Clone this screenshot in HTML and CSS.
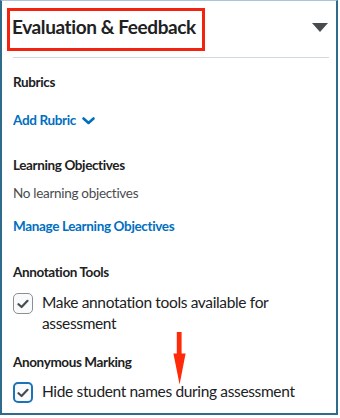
FILE: index.html
```html
<!DOCTYPE html>
<html>
<head>
<meta charset="utf-8">
<link rel="stylesheet" href="styles.css">
</head>
<body>
<div class="panel">
  <div class="header">
    <h2 class="title">Evaluation &amp; Feedback</h2>
    <svg class="caret" width="16" height="9" viewBox="0 0 16 9"><path d="M0 0H16L8 9Z" fill="#494c4e"/></svg>
  </div>
  <div class="sep"></div>
  <div class="label rubrics">Rubrics</div>
  <a class="link add-rubric">Add Rubric <svg class="chev" width="13" height="8" viewBox="0 0 13 8"><path d="M1.5 1.5L6.5 6L11.5 1.5" fill="none" stroke="#006fbf" stroke-width="2.6" stroke-linecap="round" stroke-linejoin="round"/></svg></a>
  <div class="label lo">Learning Objectives</div>
  <div class="plain">No learning objectives</div>
  <a class="link manage">Manage Learning Objectives</a>
  <div class="label annot">Annotation Tools</div>
  <div class="check-row first">
    <span class="box"><svg width="12" height="10" viewBox="0 0 12 10"><path d="M1.5 5.2L4.6 8L10.5 1.8" fill="none" stroke="#494c4e" stroke-width="2.2" stroke-linecap="round" stroke-linejoin="round"/></svg></span>
    <span class="check-text">Make annotation tools available for assessment</span>
  </div>
  <div class="label anon">Anonymous Marking</div>
  <div class="check-row second">
    <span class="box focus"><svg width="12" height="10" viewBox="0 0 12 10"><path d="M1.5 5.2L4.6 8L10.5 1.8" fill="none" stroke="#494c4e" stroke-width="2.2" stroke-linecap="round" stroke-linejoin="round"/></svg></span>
    <span class="check-text">Hide student names during assessment</span>
  </div>
  <svg class="arrow" width="13" height="53" viewBox="0 0 13 53"><path d="M3.8 0H8.6V21.5H12.6L6.6 52.5L0.4 21.5H3.8Z" fill="#ff2a0a"/></svg>
</div>
</body>
</html>
```
FILE: styles.css
```css
html, body {
  margin: 0;
  padding: 0;
  background: #ffffff;
}
body {
  font-family: Lato, "Noto Sans", sans-serif;
  color: #202122;
}
.panel {
  box-sizing: border-box;
  width: 338px;
  height: 415px;
  border: 2px solid #2f6b8b;
  border-top: 1px solid #a8c6da;
  padding: 0 0 0 11px;
  position: relative;
}
.header {
  display: flex;
  align-items: flex-start;
  justify-content: space-between;
  margin: 7px 0 0 -6px;
  padding-right: 8px;
}
.title {
  margin: 0;
  box-sizing: border-box;
  width: 198px;
  height: 43px;
  border: 3px solid #f2240f;
  padding: 0 0 5px 2px;
  font-size: 19px;
  font-weight: 700;
  line-height: 32px;
  letter-spacing: -0.4px;
  white-space: nowrap;
  color: #202122;
}
.caret {
  margin-top: 15px;
}
.sep {
  height: 1px;
  background: #d3d9e3;
  width: 316px;
  margin-top: 6px;
}
.label {
  font-size: 13.5px;
  font-weight: 700;
  line-height: 20px;
  letter-spacing: -0.38px;
  color: #202122;
}
.rubrics {
  margin-top: 14px;
}
.link {
  color: #006fbf;
  font-weight: 700;
  font-size: 13.5px;
  line-height: 20px;
  letter-spacing: -0.35px;
  display: flex;
  align-items: center;
  width: max-content;
}
.add-rubric {
  margin-top: 18px;
}
.chev {
  margin-left: 6px;
  margin-top: 1px;
}
.lo {
  margin-top: 25px;
}
.plain {
  font-size: 13.5px;
  line-height: 20px;
  letter-spacing: -0.3px;
  color: #494c4e;
  margin-top: 8px;
}
.manage {
  margin-top: 13px;
}
.annot {
  margin-top: 26px;
}
.check-row {
  display: flex;
  align-items: flex-start;
  gap: 9px;
}
.check-row.first {
  margin-top: 10px;
}
.check-row.second {
  margin-top: 9px;
}
.box {
  box-sizing: border-box;
  width: 20px;
  height: 21px;
  margin-top: 1px;
  border: 1px solid #8a8f92;
  border-radius: 5px;
  display: flex;
  align-items: center;
  justify-content: center;
  flex: none;
  background: #f9fafb;
}
.box.focus {
  border: 2px solid #1d73b7;
}
.check-text {
  font-size: 15.5px;
  line-height: 21px;
  letter-spacing: -0.35px;
  color: #202122;
  width: 280px;
}
.anon {
  margin-top: 18px;
}
.arrow {
  position: absolute;
  left: 171px;
  top: 331px;
}
```
